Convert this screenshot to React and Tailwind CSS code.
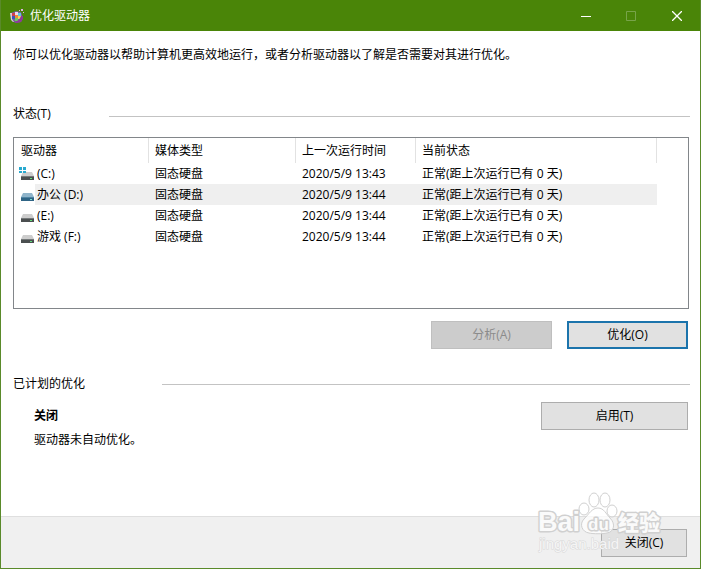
import { useState } from "react";

const drives = [
    { name: "(C:)", media: "固态硬盘", lastRun: "2020/5/9 13:43", status: "正常(距上次运行已有 0 天)", system: true },
    { name: "办公 (D:)", media: "固态硬盘", lastRun: "2020/5/9 13:44", status: "正常(距上次运行已有 0 天)" },
    { name: "(E:)", media: "固态硬盘", lastRun: "2020/5/9 13:44", status: "正常(距上次运行已有 0 天)" },
    { name: "游戏 (F:)", media: "固态硬盘", lastRun: "2020/5/9 13:44", status: "正常(距上次运行已有 0 天)" },
];

function AppIcon() {
    return (
        <svg width="16" height="16" viewBox="0 0 16 16" aria-hidden="true">
            <path d="M2 5 L7 3 L12 4 L14 10 L12 14 L7 15 L3 13 Z" fill="#7b5f9e" />
            <path d="M1 5h2v6l2 3H4l-2-2z" fill="#d9c7e0" />
            <path d="M3 5h3v3H3z" fill="#cf3f4a" />
            <path d="M6 4h3v3H6z" fill="#f0d9e6" />
            <path d="M3 8h3v3H3z" fill="#3a55b8" />
            <path d="M6 7h3v3H6z" fill="#f08a3c" />
            <path d="M9 5h3v3H9z" fill="#5cc8e6" />
            <path d="M9 8h3v3H9z" fill="#f2dc5a" />
            <path d="M6 10h3v3H6z" fill="#6fcf62" />
            <path d="M12 8h2v3l-2 3-4 1-3-1 5-2z" fill="#8c3a96" />
            <path d="M12 1h2v2h-2zM14 4h1v1h-1zM10 2h1v1h-1z" fill="#e0b0e4" />
        </svg>
    );
}

function DriveIcon({ system, selected }) {
    return (
        <svg width="16" height="16" viewBox="0 0 16 16" className="shrink-0" aria-hidden="true">
            <path d="M4 6h9l2 4H2z" fill={selected ? "#8fb4ca" : "#cdcdcd"} />
            <path d="M2 10h13v4H2z" fill={selected ? "#2f6485" : "#4b4f50"} />
            <path d="M2 10h13v1H2z" fill={selected ? "#4f84a3" : "#75797a"} />
            <path d="M11 12h2v1h-2z" fill={selected ? "#7fe0d0" : "#5fe07a"} />
            {system && <path d="M0 1h3v3H0zM4 1h3v3H4zM0 5h3v2H0zM4 5h3v2H4z" fill="#29a9cf" />}
        </svg>
    );
}

function TitleBar() {
    return (
        <header className="flex h-[31px] items-center bg-[#4a8508] pl-2 text-white">
            <AppIcon />
            <h1 className="ml-[5px] flex-1">优化驱动器</h1>
            <button type="button" aria-label="最小化" className="flex h-full w-[45px] items-center justify-center">
                <svg width="10" height="10" viewBox="0 0 10 10">
                    <path d="M0 5.5h10" stroke="white" />
                </svg>
            </button>
            <button type="button" disabled aria-label="最大化" className="flex h-full w-[45px] items-center justify-center">
                <svg width="10" height="10" viewBox="0 0 10 10">
                    <path d="M.5.5h9v9h-9z" fill="none" stroke="#78a44a" />
                </svg>
            </button>
            <button type="button" aria-label="关闭窗口" className="flex h-full w-[47px] items-center justify-center">
                <svg width="10" height="10" viewBox="0 0 10 10">
                    <path d="M0 0l10 10M10 0L0 10" stroke="white" strokeWidth="1.3" />
                </svg>
            </button>
        </header>
    );
}

function DriveTable({ selected, onSelect }) {
    return (
        <div className="h-[172px] overflow-hidden border border-[#82868a]">
            <table className="w-full table-fixed text-left">
                <colgroup>
                    <col className="w-[135px]" />
                    <col className="w-[147px]" />
                    <col className="w-[120px]" />
                    <col className="w-[241px]" />
                    <col />
                </colgroup>
                <thead>
                    <tr>
                        {["驱动器", "媒体类型", "上一次运行时间", "当前状态"].map((title, i) => (
                            <th key={title} scope="col" className="h-[25px] p-0 font-normal">
                                <div className={`flex h-[25px] items-center border-r border-[#e2e2e2] ${i === 0 ? "pl-[7px]" : "pl-1.5"}`}>
                                    {title}
                                </div>
                            </th>
                        ))}
                        <td />
                    </tr>
                </thead>
                <tbody>
                    {drives.map((drive, i) => {
                        const active = selected === i;
                        const cell = `h-[21px] p-0 pl-1.5 ${active ? "bg-[#efefef]" : ""}`;
                        return (
                            <tr key={drive.name} onClick={() => onSelect(i)}>
                                <td className="h-[21px] p-0 pl-[5px]">
                                    <div className="flex h-[21px] items-center">
                                        <DriveIcon system={drive.system} selected={active} />
                                        <span className={`flex h-full flex-1 items-center pl-0.5 ${active ? "bg-[#efefef]" : ""}`}>
                                            {drive.name}
                                        </span>
                                    </div>
                                </td>
                                <td className={cell}>{drive.media}</td>
                                <td className={cell}>{drive.lastRun}</td>
                                <td className={cell}>{drive.status}</td>
                                <td />
                            </tr>
                        );
                    })}
                </tbody>
            </table>
        </div>
    );
}

// Logo stamp shown in the bottom right corner
function Watermark() {
    return (
        <svg
            width="130"
            height="66"
            viewBox="0 0 130 66"
            aria-hidden="true"
            className="pointer-events-none absolute right-[35px] bottom-[12px]"
        >
            <g fill="#ffffff" fillOpacity="0.75" stroke="#d0d0d0" strokeWidth="1">
                <ellipse cx="49" cy="19" rx="5" ry="6" />
                <ellipse cx="59" cy="10" rx="5" ry="7" />
                <ellipse cx="70" cy="10" rx="5" ry="7" />
                <ellipse cx="77" cy="21" rx="5" ry="6" />
                <path d="M63 18c6 0 8 6 12 10 6 6 4 14-3 15-4 1-14 1-18 0-7-1-10-9-5-14 5-5 8-11 14-11z" />
            </g>
            <g
                fontFamily="Liberation Sans"
                fontWeight="bold"
                fill="#fafafa"
                stroke="#d0d0d0"
                strokeWidth="3"
                strokeLinejoin="round"
                paintOrder="stroke"
            >
                <text x="3" y="41" fontSize="27">Bai</text>
                <text x="53" y="40" fontSize="17">du</text>
                <text x="83" y="40" fontSize="21" fontFamily="Noto Sans CJK SC" fontWeight="900">经验</text>
            </g>
            <text
                x="4"
                y="59"
                fontSize="15"
                fontFamily="Liberation Sans"
                fill="#ffffff"
                fillOpacity="0.75"
                stroke="#d8d8d8"
                strokeWidth="1"
                paintOrder="stroke"
            >
                jingyan.baid
            </text>
        </svg>
    );
}

function App() {
    const [selected, setSelected] = useState(1);

    return (
        <div className="relative flex min-h-screen flex-col border border-t-0 border-[#5a8a2a] bg-white font-['Open_Sans','Noto_Sans_CJK_SC',sans-serif] text-[12px] leading-[18px] text-black">
            <TitleBar />

            <main className="flex-1 pt-[15px] pr-[11px] pb-4 pl-3">
                <p>你可以优化驱动器以帮助计算机更高效地运行，或者分析驱动器以了解是否需要对其进行优化。</p>

                <section className="mt-[41px]">
                    <div className="-mr-px flex items-center">
                        <h2 className="w-24">状态(T)</h2>
                        <div className="mt-1 h-px flex-1 bg-[#c3c3c3]" />
                    </div>
                    <div className="mt-3.5">
                        <DriveTable selected={selected} onSelect={setSelected} />
                    </div>
                    <div className="mt-3 mr-px flex justify-end gap-[15px]">
                        <button type="button" disabled className="h-7 w-[121px] border border-[#bfbfbf] bg-[#cccccc] text-[#8b8b8b]">
                            分析(A)
                        </button>
                        <button type="button" className="h-7 w-[121px] border-2 border-[#1c74ac] bg-[#e1e1e1]">
                            优化(O)
                        </button>
                    </div>
                </section>

                <section className="mt-[26px]">
                    <div className="-mr-px flex items-center">
                        <h2 className="w-[149px]">已计划的优化</h2>
                        <div className="h-px flex-1 bg-[#c3c3c3]" />
                    </div>
                    <div className="mt-[9px] mr-px flex items-start justify-between pl-[21px]">
                        <div className="pt-[5px]">
                            <p className="font-bold">关闭</p>
                            <p className="mt-1.5">驱动器未自动优化。</p>
                        </div>
                        <button type="button" className="h-7 w-[147px] border border-[#adadad] bg-[#e1e1e1]">
                            启用(T)
                        </button>
                    </div>
                </section>
            </main>

            <footer className="flex justify-end border-t border-[#dfdfdf] bg-[#f0f0f0] pt-3 pr-[13px] pb-[11px] pl-3">
                <button type="button" className="h-7 w-[86px] border border-[#adadad] bg-[#e1e1e1]">
                    关闭(C)
                </button>
            </footer>
            <Watermark />
        </div>
    );
}

export default App;
